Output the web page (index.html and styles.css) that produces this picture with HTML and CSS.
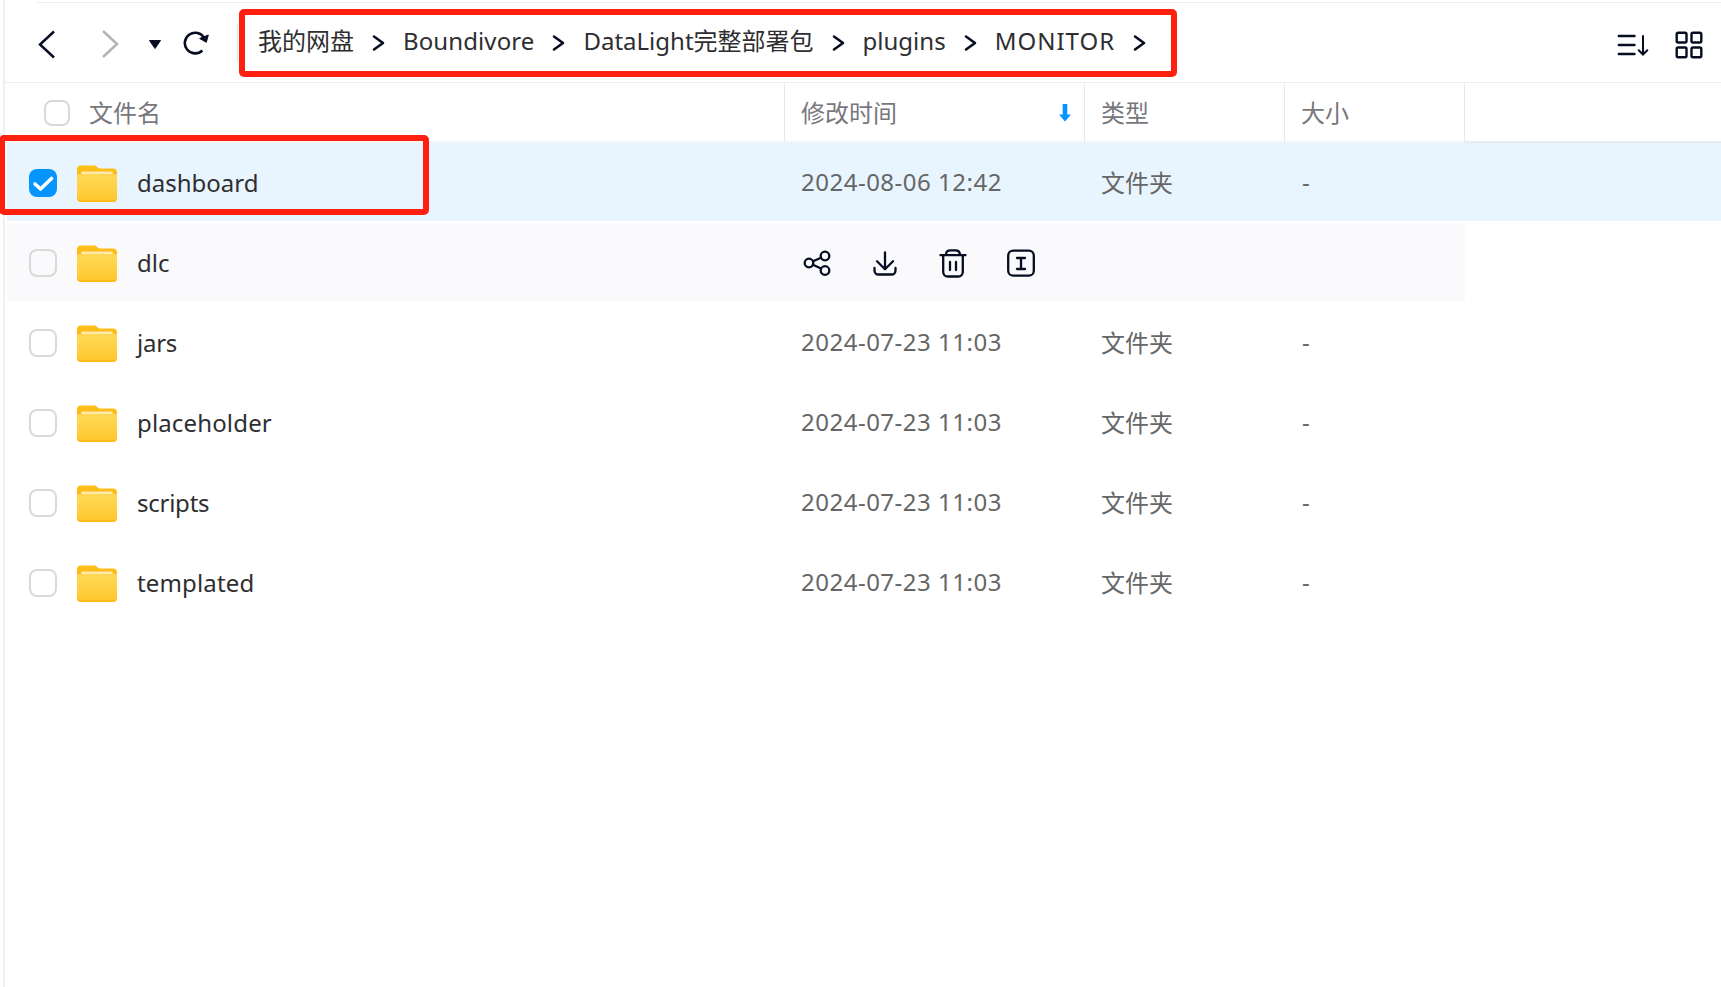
FILE: index.html
```html
<!DOCTYPE html>
<html lang="zh-CN">
<head>
<meta charset="utf-8">
<title>我的网盘</title>
<link rel="stylesheet" href="styles.css">
</head>
<body>
<svg class="defs" width="0" height="0" aria-hidden="true">
  <defs>
    <linearGradient id="front" x1="0" y1="0" x2="0" y2="1"><stop offset="0" stop-color="#ffda57"/><stop offset="1" stop-color="#ffc72f"/></linearGradient>
    <linearGradient id="back" x1="0" y1="0" x2="0" y2="1"><stop offset="0" stop-color="#fdc01c"/><stop offset="1" stop-color="#ffb20c"/></linearGradient>
    <linearGradient id="paper" x1="0" y1="0" x2="0" y2="1"><stop offset="0" stop-color="#ffe6a8"/><stop offset="1" stop-color="#ffeec2"/></linearGradient>
    <symbol id="folder" viewBox="0 0 40 37">
      <path d="M0 4.5A4 4 0 0 1 4 .5H17.5C20 .5 20.500 3.500 23 3.500H36A4 4 0 0 1 40 7.500V20H0Z" fill="url(#back)"/>
      <path d="M4 12V8.500A2 2 0 0 1 6 6.500H34A2 2 0 0 1 36 8.500V12Z" fill="url(#paper)"/>
      <path d="M0 9.200H40V33A4 4 0 0 1 36 37H4A4 4 0 0 1 0 33Z" fill="#ffb511"/>
      <path d="M0 9.200H40V31.500A4 4 0 0 1 36 35.500H4A4 4 0 0 1 0 31.500Z" fill="url(#front)"/>
    </symbol>
    <symbol id="sep" viewBox="0 0 14 18"><path d="M2 2.500 11 9 2 15.500" fill="none" stroke="#060d20" stroke-width="2.600" stroke-linecap="round" stroke-linejoin="round"/></symbol>
  </defs>
</svg>
<div class="app">
  <header class="toolbar">
    <nav class="history">
      <svg class="back" width="20" height="30" viewBox="0 0 20 30"><path d="M17 2.500 3 15.500 17 28.500" fill="none" stroke="#060d20" stroke-width="2.500"/></svg>
      <svg class="forward" width="20" height="30" viewBox="0 0 20 30"><path d="M2 2 16 15 2 28" fill="none" stroke="#b4b4b4" stroke-width="2.500"/></svg>
      <svg class="caret" width="14" height="11" viewBox="0 0 14 11"><path d="M1.500 1.500H12.500L7 9.500Z" fill="#060d20" stroke="#060d20" stroke-linejoin="round"/></svg>
      <svg class="refresh" width="28" height="26" viewBox="0 0 28 26"><path d="M19.300 20.500A10.300 10.300 0 1 1 21.200 8.200" fill="none" stroke="#060d20" stroke-width="2.600"/><path d="M16.700 8.500 25.300 5 23.300 12.300Z" fill="#060d20" stroke="#060d20" stroke-linejoin="round"/></svg>
      <span class="divider"></span>
    </nav>
    <nav class="crumbs">
      <span>我的网盘</span><svg class="sep"><use href="#sep"/></svg>
      <span class="c2">Boundivore</span><svg class="sep"><use href="#sep"/></svg>
      <span>DataLight完整部署包</span><svg class="sep"><use href="#sep"/></svg>
      <span>plugins</span><svg class="sep"><use href="#sep"/></svg>
      <span class="c5">MONITOR</span><svg class="sep"><use href="#sep"/></svg>
    </nav>
    <div class="views">
      <svg width="32" height="24" viewBox="0 0 32 24" fill="none" stroke="#060d20" stroke-width="2.400" stroke-linecap="round"><path d="M1.800 3H17.500M1.800 12H17.500M1.800 21H17.500"/><path d="M26 3V21.300M21.700 17.200 26 21.500 30.300 17.200" stroke-width="2"/></svg>
      <svg width="28" height="28" viewBox="0 0 28 28" fill="none" stroke="#060d20" stroke-width="2.400"><rect x="1.700" y="1.700" width="9.800" height="9.800" rx="1.500"/><rect x="16.500" y="1.700" width="9.800" height="9.800" rx="1.500"/><rect x="1.700" y="16.500" width="9.800" height="9.800" rx="1.500"/><rect x="16.500" y="16.500" width="9.800" height="9.800" rx="1.500"/></svg>
    </div>
  </header>
  <div class="head">
    <div class="h name"><span class="box small"></span>文件名</div>
    <div class="h">修改时间<svg class="sort" width="14" height="20" viewBox="0 0 14 20"><path d="M4.700 1H9.300V11.500H13L7 18.500 1 11.500H4.700Z" fill="#0694ff"/></svg></div>
    <div class="h">类型</div>
    <div class="h">大小</div>
    <div class="rest"></div>
  </div>
  <main class="rows">
    <div class="row selected"><div class="name"><span class="box checked"><svg width="28" height="28" viewBox="0 0 28 28"><path d="M6 15 11.500 20 22.500 9.500" fill="none" stroke="#fff" stroke-width="3.600" stroke-linecap="round" stroke-linejoin="round"/></svg></span><svg class="folder"><use href="#folder"/></svg><span>dashboard</span></div><div class="date">2024-08-06 12:42</div><div class="kind">文件夹</div><div class="size">-</div></div>
    <div class="row hover"><div class="name"><span class="box"></span><svg class="folder"><use href="#folder"/></svg><span>dlc</span></div>
      <div class="actions">
        <svg width="30" height="30" viewBox="0 0 30 30"><circle cx="7" cy="15" r="4.300"/><circle cx="23" cy="8" r="4.300"/><circle cx="23" cy="22.500" r="4.300"/><path d="M11 13.300 19 9.700M11 16.800 19 20.500"/></svg>
        <svg width="30" height="30" viewBox="0 0 30 30"><path d="M15 4.500V20M7 13.300 15 21.200 23 13.300M4.500 20V22.500A4 4 0 0 0 8.500 26.500H21.500A4 4 0 0 0 25.500 22.500V20"/></svg>
        <svg width="30" height="30" viewBox="0 0 30 30"><path d="M2.500 7.200H27.500M8 7C8 3.500 9.500 2.300 12.500 2.300H17.500C20.500 2.300 22 3.500 22 7M5.200 7.500V24A4.500 4.500 0 0 0 9.700 28.500H20.300A4.500 4.500 0 0 0 24.800 24V7.500M12 14V22M18 14V22"/></svg>
        <svg width="30" height="30" viewBox="0 0 30 30"><rect x="2.200" y="2.700" width="25.600" height="25" rx="5"/><path d="M11 10H19M11 21H19M15 10V21"/></svg>
      </div><div></div><div></div></div>
    <div class="row"><div class="name"><span class="box"></span><svg class="folder"><use href="#folder"/></svg><span class="tight">jars</span></div><div class="date">2024-07-23 11:03</div><div class="kind">文件夹</div><div class="size">-</div></div>
    <div class="row"><div class="name"><span class="box"></span><svg class="folder"><use href="#folder"/></svg><span class="loose">placeholder</span></div><div class="date">2024-07-23 11:03</div><div class="kind">文件夹</div><div class="size">-</div></div>
    <div class="row"><div class="name"><span class="box"></span><svg class="folder"><use href="#folder"/></svg><span class="tight">scripts</span></div><div class="date">2024-07-23 11:03</div><div class="kind">文件夹</div><div class="size">-</div></div>
    <div class="row"><div class="name"><span class="box"></span><svg class="folder"><use href="#folder"/></svg><span class="loose">templated</span></div><div class="date">2024-07-23 11:03</div><div class="kind">文件夹</div><div class="size">-</div></div>
  </main>
</div>
<div class="mark mark-path"></div>
<div class="mark mark-row"></div>
</body>
</html>
```
FILE: styles.css
```css
* { box-sizing: border-box; }
body {
  margin: 0;
  height: 987px;
  overflow: hidden;
  position: relative;
  background: #fff;
  color: #2e2e30;
  font: 24px/34px "Noto Sans", "Noto Sans CJK SC", sans-serif;
}
svg { display: block; flex: none; }
.defs { position: absolute; }
.app { height: 987px; margin-left: 3px; border-left: 2px solid #f0f0f0; }

.toolbar { height: 83px; display: flex; border-bottom: 1px solid #ededed; }
.toolbar::before { content: ""; width: 32px; flex: none; }
.toolbar > * { border-top: 1px solid #ededed; margin-top: 2px; }
.history { display: flex; width: 221px; height: 80px; align-items: flex-start; }
.back { margin: 26px 0 0; }
.forward { margin: 26px 0 0 44px; }
.caret { margin: 36px 0 0 27px; }
.refresh { margin: 27px 0 0 21px; }
.divider { width: 1px; height: 38px; margin: 21px 0 0 26px; background: #e4e4e4; }
.crumbs { flex: 1; display: flex; align-items: flex-start; padding-top: 21px; white-space: nowrap; }
.sep { width: 14px; height: 18px; margin: 10px 17px 0 18px; }
.c2 { letter-spacing: .1px; }
.c5 { letter-spacing: 1px; }
.views { display: flex; align-items: center; gap: 26px; padding: 4px 18px 0 0; height: 80px; }

.head { display: grid; grid-template-columns: 780px 300px 200px 180px 1fr; height: 60px; color: #77777d; }
.h { display: flex; align-items: center; padding: 2px 12px 0 16px; border-right: 1px solid #e8e8e8; border-bottom: 2px solid #f5f5f5; }
.h.name { padding-left: 39px; }
.rest { border-bottom: 2px solid #ebebf2; }
.sort { margin-left: auto; }
.box { flex: none; width: 28px; height: 28px; border: 2px solid #d9d9d9; border-radius: 8px; background: #fff; }
.box.small { width: 26px; height: 26px; margin-right: 19px; }
.box.checked { border: 0; background: #0694ff; }

.rows { display: grid; gap: 2px; padding-left: 2px; }
.row { display: grid; grid-template-columns: 778px 300px 200px 180px; width: 1458px; height: 78px; align-items: center; color: #666; }
.selected { width: auto; background: #e8f5fe; }
.hover { background: #fafafc; }
.hover .box { background: transparent; }
.row .name { display: flex; align-items: center; padding: 2px 0 0 22px; color: #2e2e30; }
.row .name > span:last-child { margin-top: -1px; }
.tight { letter-spacing: -.25px; }
.loose { letter-spacing: .15px; }
.folder { width: 40px; height: 37px; margin: 1px 20px 0; }
.date, .kind, .size { padding-left: 16px; }
.date { letter-spacing: .5px; }
.kind { padding-top: 2px; }
.size { padding-left: 17px; }
.actions { display: flex; gap: 38px; padding: 2px 0 0 17px; }
.actions svg { fill: none; stroke: #060d20; stroke-width: 2.3; stroke-linecap: round; stroke-linejoin: round; }

.mark { position: absolute; border: 6px solid #ff2010; border-radius: 5px; }
.mark-path { left: 239px; top: 9px; width: 938px; height: 68px; }
.mark-row { left: -1px; top: 135px; width: 430px; height: 80px; }
```
